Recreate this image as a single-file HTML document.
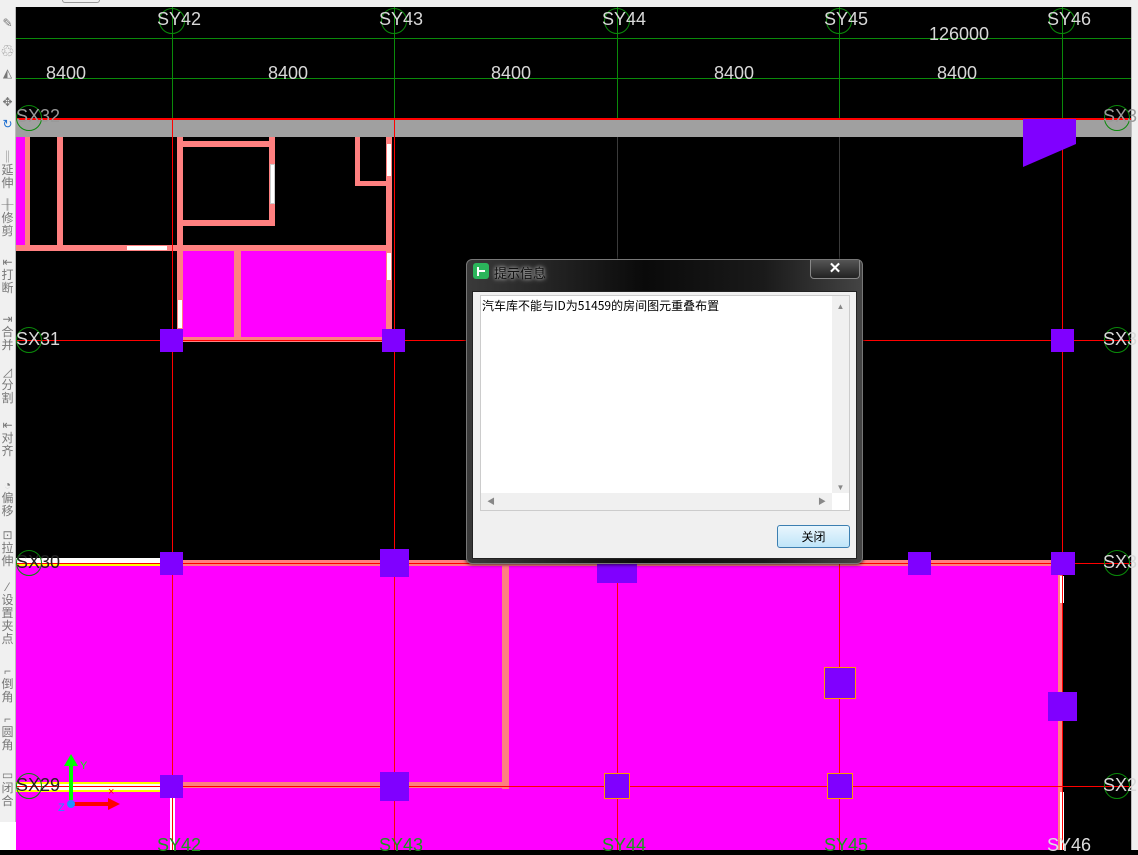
<!DOCTYPE html>
<html><head><meta charset="utf-8"><style>
*{margin:0;padding:0;box-sizing:border-box}
body{width:1138px;height:850px;overflow:hidden;background:#000;position:relative;font-family:"Liberation Sans","Noto Sans CJK SC",sans-serif}
.a{position:absolute}
.w{position:absolute;background:#ff8080}
.m{position:absolute;background:#ff00ff}
.c{position:absolute;background:#8000ff}
.lbl{position:absolute;color:#d8d8d8;font-size:18px;line-height:18px;white-space:nowrap}
.circ{position:absolute;width:26px;height:26px;border:1px solid #0a8a0a;border-radius:50%}
.tb{position:absolute;left:0;width:15px;color:#777;font-size:12px;line-height:13px;text-align:center;font-family:"Noto Sans CJK SC",sans-serif}
</style></head><body>
<div class="a" style="left:0;top:0;width:1138px;height:7px;background:#f0f0f0"></div>
<div class="a" style="left:62px;top:0;width:38px;height:3px;border:1px solid #999;border-top:none;border-radius:0 0 3px 3px"></div>
<div class="a" style="left:1131px;top:7px;width:7px;height:843px;background:#f0f0f0;border-left:1px solid #bbb"></div>
<div class="m" style="left:16px;top:565px;width:1046px;height:285px"></div>
<div class="m" style="left:16px;top:137px;width:9px;height:108px"></div>
<div class="m" style="left:182px;top:251px;width:205px;height:88px"></div>
<div class="a" style="left:16px;top:119px;width:1115px;height:18px;background:#a0a0a0"></div>
<div class="a" style="left:16px;top:38px;width:1115px;height:1px;background:#0a8a0a"></div>
<div class="a" style="left:16px;top:78px;width:1115px;height:1px;background:#0a8a0a"></div>
<div class="a" style="left:172px;top:7px;width:1px;height:111px;background:#0a8a0a"></div>
<div class="a" style="left:394px;top:7px;width:1px;height:111px;background:#0a8a0a"></div>
<div class="a" style="left:617px;top:7px;width:1px;height:111px;background:#0a8a0a"></div>
<div class="a" style="left:839px;top:7px;width:1px;height:111px;background:#0a8a0a"></div>
<div class="a" style="left:1062px;top:7px;width:1px;height:111px;background:#0a8a0a"></div>
<div class="w" style="left:25px;top:137px;width:5px;height:113px"></div>
<div class="w" style="left:57px;top:137px;width:6px;height:110px"></div>
<div class="w" style="left:16px;top:245px;width:375px;height:6px"></div>
<div class="w" style="left:177px;top:137px;width:6px;height:200px"></div>
<div class="w" style="left:177px;top:141px;width:97px;height:6px"></div>
<div class="w" style="left:177px;top:220px;width:97px;height:6px"></div>
<div class="w" style="left:269px;top:137px;width:6px;height:89px"></div>
<div class="w" style="left:355px;top:137px;width:5px;height:49px"></div>
<div class="w" style="left:356px;top:181px;width:36px;height:5px"></div>
<div class="w" style="left:386px;top:137px;width:6px;height:205px"></div>
<div class="w" style="left:234px;top:251px;width:7px;height:88px"></div>
<div class="w" style="left:182px;top:337px;width:210px;height:5px"></div>
<div class="w" style="left:16px;top:560px;width:1046px;height:6px"></div>
<div class="w" style="left:502px;top:566px;width:7px;height:223px"></div>
<div class="w" style="left:182px;top:782px;width:327px;height:6px"></div>
<div class="w" style="left:1058px;top:566px;width:5px;height:284px"></div>
<div class="a" style="left:270px;top:164px;width:5px;height:40px;background:#fff;border:1px solid #ccc"></div>
<div class="a" style="left:387px;top:144px;width:4px;height:32px;background:#fff"></div>
<div class="a" style="left:387px;top:253px;width:4px;height:27px;background:#fff"></div>
<div class="a" style="left:178px;top:300px;width:4px;height:28px;background:#fff"></div>
<div class="a" style="left:127px;top:246px;width:40px;height:4px;background:#fff"></div>
<div class="a" style="left:16px;top:558px;width:144px;height:8px;background:#fff;border-bottom:2px solid #ff0"></div>
<div class="a" style="left:16px;top:782px;width:144px;height:10px;background:#fff;border-top:2px solid #ff0;border-bottom:2px solid #ff0"></div>
<div class="a" style="left:170px;top:792px;width:5px;height:58px;background:#fff"></div>
<div class="a" style="left:1060px;top:576px;width:4px;height:27px;background:#fff"></div>
<div class="a" style="left:1060px;top:792px;width:4px;height:58px;background:#fff"></div>
<div class="a" style="left:172px;top:118px;width:1px;height:732px;background:#f00"></div>
<div class="a" style="left:394px;top:118px;width:1px;height:732px;background:#f00"></div>
<div class="a" style="left:617px;top:137px;width:1px;height:423px;background:#3a3a3a"></div>
<div class="a" style="left:839px;top:137px;width:1px;height:423px;background:#3a3a3a"></div>
<div class="a" style="left:617px;top:560px;width:1px;height:290px;background:#f00"></div>
<div class="a" style="left:839px;top:560px;width:1px;height:290px;background:#f00"></div>
<div class="a" style="left:1062px;top:118px;width:1px;height:732px;background:#f00"></div>
<div class="a" style="left:16px;top:118px;width:1115px;height:2px;background:#f00"></div>
<div class="a" style="left:16px;top:340px;width:1115px;height:1px;background:#f00"></div>
<div class="a" style="left:16px;top:563px;width:1115px;height:1px;background:#f00"></div>
<div class="a" style="left:16px;top:786px;width:1115px;height:1px;background:#f00"></div>
<svg class="a" style="left:1023px;top:119px" width="54" height="50"><polygon points="0,0 53,0 53,25 0,48" fill="#8000ff"/></svg>
<div class="c" style="left:160px;top:329px;width:23px;height:23px"></div>
<div class="c" style="left:382px;top:329px;width:23px;height:23px"></div>
<div class="c" style="left:1051px;top:329px;width:23px;height:23px"></div>
<div class="c" style="left:160px;top:552px;width:23px;height:23px"></div>
<div class="c" style="left:380px;top:549px;width:29px;height:28px"></div>
<div class="c" style="left:597px;top:560px;width:40px;height:23px"></div>
<div class="c" style="left:908px;top:552px;width:23px;height:23px"></div>
<div class="c" style="left:1051px;top:552px;width:24px;height:23px"></div>
<div class="c" style="left:824px;top:667px;width:32px;height:32px;border:1px solid #ff9900"></div>
<div class="c" style="left:1048px;top:692px;width:29px;height:29px"></div>
<div class="c" style="left:160px;top:775px;width:23px;height:23px"></div>
<div class="c" style="left:380px;top:772px;width:29px;height:29px"></div>
<div class="c" style="left:604px;top:773px;width:26px;height:26px;border:1px solid #ff9900"></div>
<div class="c" style="left:827px;top:773px;width:26px;height:26px;border:1px solid #ff9900"></div>
<div class="circ" style="left:159px;top:8px"></div><div class="lbl" style="left:157px;top:10px">SY42</div>
<div class="circ" style="left:381px;top:8px"></div><div class="lbl" style="left:379px;top:10px">SY43</div>
<div class="circ" style="left:604px;top:8px"></div><div class="lbl" style="left:602px;top:10px">SY44</div>
<div class="circ" style="left:826px;top:8px"></div><div class="lbl" style="left:824px;top:10px">SY45</div>
<div class="circ" style="left:1049px;top:8px"></div><div class="lbl" style="left:1047px;top:10px">SY46</div>
<div class="lbl" style="left:929px;top:25px">126000</div>
<div class="lbl" style="left:46px;top:64px">8400</div>
<div class="lbl" style="left:268px;top:64px">8400</div>
<div class="lbl" style="left:491px;top:64px">8400</div>
<div class="lbl" style="left:714px;top:64px">8400</div>
<div class="lbl" style="left:937px;top:64px">8400</div>
<div class="circ" style="left:16px;top:105px"></div><div class="lbl" style="left:16px;top:107px;color:#999">SX32</div>
<div class="circ" style="left:1104px;top:105px"></div><div class="lbl" style="left:1103px;top:107px;color:#999">SX3</div>
<div class="circ" style="left:16px;top:327px"></div><div class="lbl" style="left:16px;top:330px">SX31</div>
<div class="circ" style="left:1104px;top:327px"></div><div class="lbl" style="left:1103px;top:330px">SX3</div>
<div class="circ" style="left:16px;top:550px"></div><div class="lbl" style="left:16px;top:553px;color:#222">SX30</div>
<div class="circ" style="left:1104px;top:550px"></div><div class="lbl" style="left:1103px;top:553px">SX3</div>
<div class="circ" style="left:16px;top:773px"></div><div class="lbl" style="left:16px;top:776px;color:#222">SX29</div>
<div class="circ" style="left:1104px;top:773px"></div><div class="lbl" style="left:1103px;top:776px">SX2</div>
<div class="lbl" style="left:157px;top:836px;color:#1a9a1a">SY42</div>
<div class="lbl" style="left:379px;top:836px;color:#1a9a1a">SY43</div>
<div class="lbl" style="left:602px;top:836px;color:#1a9a1a">SY44</div>
<div class="lbl" style="left:824px;top:836px;color:#1a9a1a">SY45</div>
<div class="lbl" style="left:1047px;top:836px;color:#ddd">SY46</div>
<div class="a" style="left:69px;top:762px;width:4px;height:38px;background:#0f0"></div>
<svg class="a" style="left:64px;top:754px" width="14" height="12"><polygon points="7,0 14,12 0,12" fill="#0f0"/></svg>
<div class="a" style="left:73px;top:802px;width:40px;height:4px;background:#f00"></div>
<svg class="a" style="left:108px;top:798px" width="12" height="12"><polygon points="0,0 12,6 0,12" fill="#f00"/></svg>
<div class="a" style="left:67px;top:800px;width:8px;height:8px;border-radius:50%;background:#1e90ff"></div>
<div class="lbl" style="left:80px;top:757px;color:#0f0;font-size:11px">Y</div>
<div class="lbl" style="left:58px;top:799px;color:#1e90ff;font-size:11px">Z</div>
<div class="lbl" style="left:108px;top:783px;color:#f00;font-size:11px">×</div>
<div class="a" style="left:0;top:7px;width:16px;height:815px;background:#f0f0f0;border-right:1px solid #bbb"></div>
<div class="a" style="left:0;top:822px;width:16px;height:28px;background:#fff"></div>
<div class="tb" style="top:16px">✎</div>
<div class="tb" style="top:44px">♲</div>
<div class="tb" style="top:66px">◭</div>
<div class="tb" style="top:95px">✥</div>
<div class="tb" style="top:117px;color:#1e6fd0">↻</div>
<div class="tb" style="top:150px">‖<br>延<br>伸</div>
<div class="tb" style="top:198px">╫<br>修<br>剪</div>
<div class="tb" style="top:255px">⇤<br>打<br>断</div>
<div class="tb" style="top:312px">⇥<br>合<br>并</div>
<div class="tb" style="top:365px">◿<br>分<br>割</div>
<div class="tb" style="top:418px">⇤<br>对<br>齐</div>
<div class="tb" style="top:478px">◔<br>偏<br>移</div>
<div class="tb" style="top:528px">⊡<br>拉<br>伸</div>
<div class="tb" style="top:580px">⁄<br>设<br>置<br>夹<br>点</div>
<div class="tb" style="top:664px">⌐<br>倒<br>角</div>
<div class="tb" style="top:712px">⌐<br>圆<br>角</div>
<div class="tb" style="top:768px">▭<br>闭<br>合</div>
<div class="a" style="left:466px;top:259px;width:397px;height:305px;border-radius:6px;border:1px solid #777;background:linear-gradient(90deg,#3a3a3a,#0a0a0a 45%,#1a1a1a 75%,#444);box-shadow:0 0 4px #000">
 <div class="a" style="left:6px;top:3px;width:16px;height:16px;border-radius:3px;background:#2bb55b"></div>
 <div class="a" style="left:10px;top:7px;width:2px;height:9px;background:#fff"></div>
 <div class="a" style="left:12px;top:10px;width:6px;height:2px;background:#fff"></div>
 <div class="a" style="left:27px;top:3px;font-size:13px;color:#111;text-shadow:0 0 6px #aaa,0 0 3px #ccc;font-family:'Noto Sans CJK SC',sans-serif">提示信息</div>
 <div class="a" style="left:343px;top:0;width:50px;height:19px;border:1px solid #888;border-top:none;border-radius:0 0 4px 4px;background:linear-gradient(#555,#222);color:#fff;text-align:center;font-size:15px;line-height:17px;font-weight:bold">✕</div>
 <div class="a" style="left:5px;top:31px;width:385px;height:268px;background:#f0f0f0;border:1px solid #222">
  <div class="a" style="left:7px;top:3px;width:370px;height:216px;background:#fff;border:1px solid #ccc">
   <div class="a" style="left:1px;top:1px;font-size:12px;color:#000;font-family:'WenQuanYi Zen Hei','Noto Sans CJK SC',sans-serif">汽车库不能与ID为51459的房间图元重叠布置</div>
   <div class="a" style="right:0;top:0;width:17px;height:197px;background:#f0f0f0;color:#888;font-size:8px;text-align:center"><div style="margin-top:6px">▲</div><div style="margin-top:172px">▼</div></div>
   <div class="a" style="left:0;top:197px;width:351px;height:17px;background:#f0f0f0;color:#888;font-size:8px;line-height:17px;padding-left:6px">◀<span style="float:right;margin-right:6px">▶</span></div>
  </div>
  <div class="a" style="left:304px;top:233px;width:73px;height:23px;border:1px solid #3c7fb1;border-radius:3px;background:linear-gradient(#e9f6fd,#bfe5f9);font-size:12px;text-align:center;line-height:21px;font-family:'Noto Sans CJK SC',sans-serif">关闭</div>
 </div>
</div>
</body></html>
